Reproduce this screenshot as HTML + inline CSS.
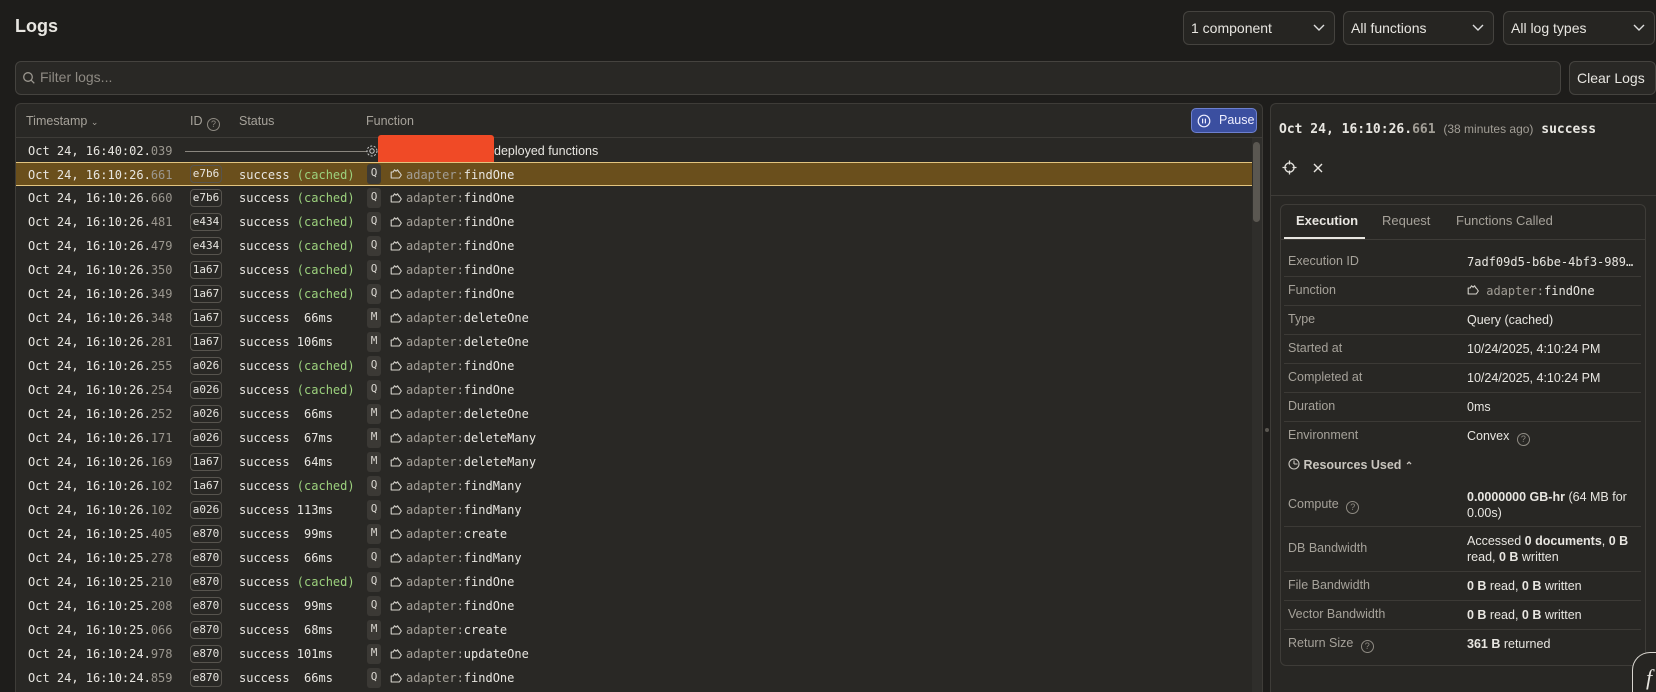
<!DOCTYPE html>
<html><head><meta charset="utf-8"><style>
*{box-sizing:border-box;margin:0;padding:0}
html,body{width:1656px;height:692px;overflow:hidden}
body{background:#1e1d1b;font-family:"Liberation Sans",sans-serif;color:#e8e6e1;position:relative}
.abs{position:absolute}
.sel{position:absolute;top:11px;height:34px;border:1px solid #45433f;border-radius:6px;background:#262522;font-size:14px;line-height:32px;padding-left:7px;color:#e8e6e1}
.sel svg{position:absolute;right:9px;top:12px}
.mono{font-family:"DejaVu Sans Mono","Liberation Mono",monospace}
.row{position:absolute;left:16px;width:1236px;height:24px;line-height:24px;font-size:12px;white-space:pre;font-family:"DejaVu Sans Mono","Liberation Mono",monospace;color:#e8e6e1}
.row span{position:absolute}
.ts{left:12px}.ts i{font-style:normal;color:#9b978f}
.id{left:174px;top:3px;height:18px;line-height:16px;width:32px;border:1px solid #57544e;border-radius:4px;text-align:center;font-size:11px}
.st{left:223px}.st i{font-style:normal;color:#9cd17d}
.ty{left:351px;top:2px;width:14px;height:20px;line-height:18px;background:#3b3935;border-radius:3px;text-align:center;font-size:11px;color:#d8d5cf}
.ic{left:374px;top:6px;height:12px;line-height:0}
.ic svg{display:block}
.fn{left:390px}.fn i{font-style:normal;color:#a29e96}
.hl{background:#6a4f1c;border-top:1px solid #e2c47f;border-bottom:1px solid #e2c47f}
.lab{position:absolute;left:1288px;font-size:12.5px;color:#a6a29a}
.val{position:absolute;left:1467px;font-size:12.5px;color:#e8e6e1;line-height:16px}
.sep{position:absolute;left:1284px;width:357px;height:1px;background:#3c3a36}
b{font-weight:bold}
.q{display:inline-block;width:13px;height:13px;border:1px solid #8f8b83;border-radius:50%;font-size:9px;line-height:11px;text-align:center;color:#8f8b83;vertical-align:-2px;margin-left:4px}
</style></head><body>
<svg width="0" height="0" style="position:absolute"><defs><symbol id="fi" viewBox="0 0 12 12"><path d="M1.2 4h2l1.3-2.2 1.6 1.4 1.5-1.4 1.2 2.2h0.5l2 3-2 3H1.2z" fill="none" stroke="#d6d3cc" stroke-width="1.1" stroke-linejoin="round"/></symbol></defs></svg>

<div class="abs" style="left:15px;top:16px;font-size:18px;font-weight:bold">Logs</div>
<div class="sel" style="left:1183px;width:152px">1 component<svg width="12" height="8"><path d="M1 1l5 5 5-5" stroke="#ddd" fill="none" stroke-width="1.4"/></svg></div>
<div class="sel" style="left:1343px;width:151px">All functions<svg width="12" height="8"><path d="M1 1l5 5 5-5" stroke="#ddd" fill="none" stroke-width="1.4"/></svg></div>
<div class="sel" style="left:1503px;width:152px">All log types<svg width="12" height="8"><path d="M1 1l5 5 5-5" stroke="#ddd" fill="none" stroke-width="1.4"/></svg></div>
<div class="abs" style="left:15px;top:61px;width:1546px;height:34px;border:1px solid #45433f;border-radius:6px;background:#292825"></div>
<svg class="abs" style="left:22px;top:71px" width="14" height="14"><circle cx="6" cy="6" r="4.3" stroke="#9b978f" fill="none" stroke-width="1.3"/><path d="M9.3 9.3l3 3" stroke="#9b978f" stroke-width="1.3"/></svg>
<div class="abs" style="left:40px;top:69px;font-size:14px;color:#8e8a83">Filter logs...</div>
<div class="abs" style="left:1569px;top:61px;width:87px;height:34px;border:1px solid #45433f;border-radius:6px;background:#292825;font-size:14px;line-height:32px;padding-left:7px">Clear Logs</div>

<div class="abs" style="left:15px;top:103px;width:1248px;height:589px;border:1px solid #3e3c38;border-bottom:none;border-radius:6px 6px 0 0;background:#292825"></div>
<div class="abs" style="left:16px;top:137px;width:1246px;height:1px;background:#3e3c38"></div>
<div class="abs" style="left:26px;top:114px;font-size:12.5px;color:#a6a29a">Timestamp <span style="font-size:9px">&#8964;</span></div>
<div class="abs" style="left:190px;top:114px;font-size:12.5px;color:#a6a29a">ID <span class="q" style="margin-left:1px">?</span></div>
<div class="abs" style="left:239px;top:114px;font-size:12.5px;color:#a6a29a">Status</div>
<div class="abs" style="left:366px;top:114px;font-size:12.5px;color:#a6a29a">Function</div>
<div class="abs" style="left:1191px;top:108px;width:66px;height:25px;background:#3b4fa0;border:1px solid #6d80cf;border-radius:5px;font-size:12.5px;line-height:23px;padding-left:27px;color:#eef">Pause</div>
<svg class="abs" style="left:1197px;top:114px" width="14" height="14"><circle cx="7" cy="7" r="5.8" stroke="#eef" fill="none" stroke-width="1.2"/><path d="M5.6 4.6v4.8M8.4 4.6v4.8" stroke="#eef" stroke-width="1.2"/></svg>
<div class="abs" style="left:1252px;top:138px;width:10px;height:554px;background:#2f2e2b"></div>
<div class="abs" style="left:1253px;top:142px;width:7px;height:80px;background:#5a5751;border-radius:4px"></div>
<div class="abs" style="left:1265px;top:428px;width:4px;height:4px;background:#5a5751;border-radius:2px"></div>

<div class="row" style="top:139px"><span class="ts">Oct 24, 16:40:02.<i>039</i></span><span style="left:169px;top:12px;width:182px;height:1px;background:#8a867f"></span><span style="left:349px;top:5px;line-height:0"><svg width="14" height="14"><circle cx="7" cy="7" r="2.2" stroke="#ccc" fill="none"/><circle cx="7" cy="7" r="5" stroke="#ccc" fill="none" stroke-dasharray="2 1.6"/></svg></span><span style="left:478px;font-family:'Liberation Sans',sans-serif;font-size:12.5px">deployed functions</span></div>
<div class="abs" style="left:378px;top:135px;width:116px;height:30px;background:#f04a26;border-radius:3px"></div>

<div class="row hl" style="top:162px"><span class="ts">Oct 24, 16:10:26.<i>661</i></span><span class="id" style="top:2px">e7b6</span><span class="st">success <i>(cached)</i></span><span class="ty" style="top:1px">Q</span><span class="ic" style="top:5px"><svg width="12" height="12"><use href="#fi"/></svg></span><span class="fn"><i>adapter:</i>findOne</span></div>
<div class="row" style="top:186px"><span class="ts">Oct 24, 16:10:26.<i>660</i></span><span class="id">e7b6</span><span class="st">success <i>(cached)</i></span><span class="ty">Q</span><span class="ic"><svg width="12" height="12"><use href="#fi"/></svg></span><span class="fn"><i>adapter:</i>findOne</span></div>
<div class="row" style="top:210px"><span class="ts">Oct 24, 16:10:26.<i>481</i></span><span class="id">e434</span><span class="st">success <i>(cached)</i></span><span class="ty">Q</span><span class="ic"><svg width="12" height="12"><use href="#fi"/></svg></span><span class="fn"><i>adapter:</i>findOne</span></div>
<div class="row" style="top:234px"><span class="ts">Oct 24, 16:10:26.<i>479</i></span><span class="id">e434</span><span class="st">success <i>(cached)</i></span><span class="ty">Q</span><span class="ic"><svg width="12" height="12"><use href="#fi"/></svg></span><span class="fn"><i>adapter:</i>findOne</span></div>
<div class="row" style="top:258px"><span class="ts">Oct 24, 16:10:26.<i>350</i></span><span class="id">1a67</span><span class="st">success <i>(cached)</i></span><span class="ty">Q</span><span class="ic"><svg width="12" height="12"><use href="#fi"/></svg></span><span class="fn"><i>adapter:</i>findOne</span></div>
<div class="row" style="top:282px"><span class="ts">Oct 24, 16:10:26.<i>349</i></span><span class="id">1a67</span><span class="st">success <i>(cached)</i></span><span class="ty">Q</span><span class="ic"><svg width="12" height="12"><use href="#fi"/></svg></span><span class="fn"><i>adapter:</i>findOne</span></div>
<div class="row" style="top:306px"><span class="ts">Oct 24, 16:10:26.<i>348</i></span><span class="id">1a67</span><span class="st">success  66ms</span><span class="ty">M</span><span class="ic"><svg width="12" height="12"><use href="#fi"/></svg></span><span class="fn"><i>adapter:</i>deleteOne</span></div>
<div class="row" style="top:330px"><span class="ts">Oct 24, 16:10:26.<i>281</i></span><span class="id">1a67</span><span class="st">success 106ms</span><span class="ty">M</span><span class="ic"><svg width="12" height="12"><use href="#fi"/></svg></span><span class="fn"><i>adapter:</i>deleteOne</span></div>
<div class="row" style="top:354px"><span class="ts">Oct 24, 16:10:26.<i>255</i></span><span class="id">a026</span><span class="st">success <i>(cached)</i></span><span class="ty">Q</span><span class="ic"><svg width="12" height="12"><use href="#fi"/></svg></span><span class="fn"><i>adapter:</i>findOne</span></div>
<div class="row" style="top:378px"><span class="ts">Oct 24, 16:10:26.<i>254</i></span><span class="id">a026</span><span class="st">success <i>(cached)</i></span><span class="ty">Q</span><span class="ic"><svg width="12" height="12"><use href="#fi"/></svg></span><span class="fn"><i>adapter:</i>findOne</span></div>
<div class="row" style="top:402px"><span class="ts">Oct 24, 16:10:26.<i>252</i></span><span class="id">a026</span><span class="st">success  66ms</span><span class="ty">M</span><span class="ic"><svg width="12" height="12"><use href="#fi"/></svg></span><span class="fn"><i>adapter:</i>deleteOne</span></div>
<div class="row" style="top:426px"><span class="ts">Oct 24, 16:10:26.<i>171</i></span><span class="id">a026</span><span class="st">success  67ms</span><span class="ty">M</span><span class="ic"><svg width="12" height="12"><use href="#fi"/></svg></span><span class="fn"><i>adapter:</i>deleteMany</span></div>
<div class="row" style="top:450px"><span class="ts">Oct 24, 16:10:26.<i>169</i></span><span class="id">1a67</span><span class="st">success  64ms</span><span class="ty">M</span><span class="ic"><svg width="12" height="12"><use href="#fi"/></svg></span><span class="fn"><i>adapter:</i>deleteMany</span></div>
<div class="row" style="top:474px"><span class="ts">Oct 24, 16:10:26.<i>102</i></span><span class="id">1a67</span><span class="st">success <i>(cached)</i></span><span class="ty">Q</span><span class="ic"><svg width="12" height="12"><use href="#fi"/></svg></span><span class="fn"><i>adapter:</i>findMany</span></div>
<div class="row" style="top:498px"><span class="ts">Oct 24, 16:10:26.<i>102</i></span><span class="id">a026</span><span class="st">success 113ms</span><span class="ty">Q</span><span class="ic"><svg width="12" height="12"><use href="#fi"/></svg></span><span class="fn"><i>adapter:</i>findMany</span></div>
<div class="row" style="top:522px"><span class="ts">Oct 24, 16:10:25.<i>405</i></span><span class="id">e870</span><span class="st">success  99ms</span><span class="ty">M</span><span class="ic"><svg width="12" height="12"><use href="#fi"/></svg></span><span class="fn"><i>adapter:</i>create</span></div>
<div class="row" style="top:546px"><span class="ts">Oct 24, 16:10:25.<i>278</i></span><span class="id">e870</span><span class="st">success  66ms</span><span class="ty">Q</span><span class="ic"><svg width="12" height="12"><use href="#fi"/></svg></span><span class="fn"><i>adapter:</i>findMany</span></div>
<div class="row" style="top:570px"><span class="ts">Oct 24, 16:10:25.<i>210</i></span><span class="id">e870</span><span class="st">success <i>(cached)</i></span><span class="ty">Q</span><span class="ic"><svg width="12" height="12"><use href="#fi"/></svg></span><span class="fn"><i>adapter:</i>findOne</span></div>
<div class="row" style="top:594px"><span class="ts">Oct 24, 16:10:25.<i>208</i></span><span class="id">e870</span><span class="st">success  99ms</span><span class="ty">Q</span><span class="ic"><svg width="12" height="12"><use href="#fi"/></svg></span><span class="fn"><i>adapter:</i>findOne</span></div>
<div class="row" style="top:618px"><span class="ts">Oct 24, 16:10:25.<i>066</i></span><span class="id">e870</span><span class="st">success  68ms</span><span class="ty">M</span><span class="ic"><svg width="12" height="12"><use href="#fi"/></svg></span><span class="fn"><i>adapter:</i>create</span></div>
<div class="row" style="top:642px"><span class="ts">Oct 24, 16:10:24.<i>978</i></span><span class="id">e870</span><span class="st">success 101ms</span><span class="ty">M</span><span class="ic"><svg width="12" height="12"><use href="#fi"/></svg></span><span class="fn"><i>adapter:</i>updateOne</span></div>
<div class="row" style="top:666px;height:24px"><span class="ts">Oct 24, 16:10:24.<i>859</i></span><span class="id">e870</span><span class="st">success  66ms</span><span class="ty">Q</span><span class="ic"><svg width="12" height="12"><use href="#fi"/></svg></span><span class="fn"><i>adapter:</i>findOne</span></div>

<!-- right panel -->
<div class="abs" style="left:1270px;top:103px;width:386px;height:589px;border:1px solid #3e3c38;border-bottom:none;border-right:none;border-radius:6px 0 0 0;background:#282724"></div>
<div class="abs mono" style="left:1279px;top:122px;font-size:13px;font-weight:bold">Oct 24, 16:10:26.<span style="color:#a29e96">661</span> <span style="font-family:'Liberation Sans',sans-serif;font-weight:normal;font-size:12px;color:#a29e96">(38 minutes ago)</span> success</div>
<svg class="abs" style="left:1282px;top:160px" width="15" height="15"><circle cx="7.5" cy="7.5" r="4.6" stroke="#e8e6e1" fill="none" stroke-width="1.3"/><path d="M7.5 0.5v4M7.5 10.5v4M0.5 7.5h4M10.5 7.5h4" stroke="#e8e6e1" stroke-width="1.3"/></svg>
<svg class="abs" style="left:1313px;top:163px" width="10" height="10"><path d="M1 1l8 8M9 1l-8 8" stroke="#e8e6e1" stroke-width="1.4"/></svg>
<div class="abs" style="left:1271px;top:195px;width:385px;height:1px;background:#3e3c38"></div>
<div class="abs" style="left:1280px;top:204px;width:366px;height:462px;border:1px solid #3e3c38;border-radius:6px"></div>
<div class="abs" style="left:1281px;top:239px;width:364px;height:1px;background:#3e3c38"></div>
<div class="abs" style="left:1296px;top:213px;font-size:13px;font-weight:bold">Execution</div>
<div class="abs" style="left:1284px;top:237px;width:81px;height:2px;background:#e8e6e1"></div>
<div class="abs" style="left:1382px;top:213px;font-size:13px;color:#a6a29a">Request</div>
<div class="abs" style="left:1456px;top:213px;font-size:13px;color:#a6a29a">Functions Called</div>

<div class="lab" style="top:254px">Execution ID</div><div class="val mono" style="top:254px;font-size:12px">7adf09d5-b6be-4bf3-989…</div>
<div class="sep" style="top:276px"></div>
<div class="lab" style="top:283px">Function</div><div class="val mono" style="top:283px;font-size:12px"><svg width="12" height="12" style="vertical-align:-1px"><use href="#fi"/></svg> <span style="color:#a29e96">adapter:</span>findOne</div>
<div class="sep" style="top:305px"></div>
<div class="lab" style="top:312px">Type</div><div class="val" style="top:312px">Query (cached)</div>
<div class="sep" style="top:334px"></div>
<div class="lab" style="top:341px">Started at</div><div class="val" style="top:341px">10/24/2025, 4:10:24 PM</div>
<div class="sep" style="top:363px"></div>
<div class="lab" style="top:370px">Completed at</div><div class="val" style="top:370px">10/24/2025, 4:10:24 PM</div>
<div class="sep" style="top:392px"></div>
<div class="lab" style="top:399px">Duration</div><div class="val" style="top:399px">0ms</div>
<div class="sep" style="top:421px"></div>
<div class="lab" style="top:428px">Environment</div><div class="val" style="top:428px">Convex <span class="q">?</span></div>
<div class="lab" style="top:458px;color:#c8c5be;font-weight:bold"><svg width="12" height="12" style="vertical-align:-1px"><circle cx="6" cy="6" r="5" stroke="#c8c5be" fill="none" stroke-width="1.1"/><path d="M6 6V2.5M6 6h3.5" stroke="#c8c5be" stroke-width="1.1"/></svg> Resources Used <span style="font-size:10px">&#8963;</span></div>
<div class="lab" style="top:497px">Compute <span class="q">?</span></div><div class="val" style="top:489px"><b>0.0000000 GB-hr</b> (64 MB for<br>0.00s)</div>
<div class="sep" style="top:526px"></div>
<div class="lab" style="top:541px">DB Bandwidth</div><div class="val" style="top:533px">Accessed <b>0 documents</b>, <b>0 B</b><br>read, <b>0 B</b> written</div>
<div class="sep" style="top:571px"></div>
<div class="lab" style="top:578px">File Bandwidth</div><div class="val" style="top:578px"><b>0 B</b> read, <b>0 B</b> written</div>
<div class="sep" style="top:600px"></div>
<div class="lab" style="top:607px">Vector Bandwidth</div><div class="val" style="top:607px"><b>0 B</b> read, <b>0 B</b> written</div>
<div class="sep" style="top:629px"></div>
<div class="lab" style="top:636px">Return Size <span class="q">?</span></div><div class="val" style="top:636px"><b>361 B</b> returned</div>

<div class="abs" style="left:1632px;top:652px;width:24px;height:40px;border:1px solid #d8d5cf;border-right:none;border-bottom:none;border-radius:18px 0 0 0;background:#262522"></div>
<div class="abs" style="left:1646px;top:666px;font-family:'Liberation Serif',serif;font-style:italic;font-size:22px;line-height:24px">f</div>
</body></html>
